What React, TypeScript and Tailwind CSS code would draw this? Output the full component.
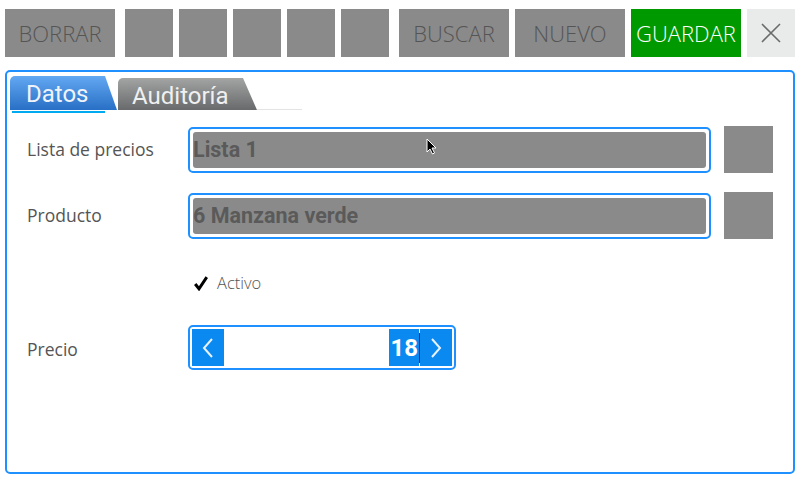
import React from "react";

const btn = "h-[48px] bg-[#8a8a8a] text-[#555] flex items-center justify-center";
const labelCls = "w-[161px] text-[17.5px] text-[#555]";

function FieldBox({ text }: { text: string }) {
  return (
    <div className="flex items-center">
      <div className="w-[523px] h-[46px] border-2 border-[#1e90ff] rounded-[5px] bg-white p-[3px]">
        <div className="h-full bg-[#8a8a8a] rounded-[3px] flex items-center text-[21.5px] font-bold text-[#5a5a5a] [font-family:Roboto,sans-serif] leading-none">
          {text}
        </div>
      </div>
      <div className="ml-[13px] w-[49px] h-[47px] bg-[#8a8a8a]"></div>
    </div>
  );
}

export default function App() {
  return (
    <div className="relative w-[800px] h-[480px] bg-white overflow-hidden [font-family:'Open_Sans',sans-serif]">
      {/* toolbar */}
      <div className="flex pt-[9px] pl-[5px] text-[22px] font-light">
        <div className={`${btn} w-[110px]`}>BORRAR</div>
        <div className="flex gap-[6px] ml-[10px]">
          <div className={`${btn} w-[48px]`}></div>
          <div className={`${btn} w-[48px]`}></div>
          <div className={`${btn} w-[48px]`}></div>
          <div className={`${btn} w-[48px]`}></div>
          <div className={`${btn} w-[48px]`}></div>
        </div>
        <div className="flex gap-[6px] ml-[10px]">
          <div className={`${btn} w-[110px]`}>BUSCAR</div>
          <div className={`${btn} w-[110px]`}>NUEVO</div>
          <div className="h-[48px] w-[110px] bg-[#009a00] text-white flex items-center justify-center">GUARDAR</div>
          <div className="h-[48px] w-[48px] bg-[#e9ebeb] flex items-center justify-center">
            <svg width="22" height="22" viewBox="0 0 22 22">
              <path d="M2 2 L20 20 M20 2 L2 20" stroke="#6b6b6b" strokeWidth="1.6" />
            </svg>
          </div>
        </div>
      </div>

      {/* panel */}
      <div className="mt-[13px] mx-[5px] h-[404px] border-2 border-[#1e90ff] rounded-[5px]">
        {/* tabs */}
        <div className="pl-[3px] pt-[4px]">
          <div className="flex items-end">
            <div className="w-[107px] h-[34px] rounded-tl-[5px] bg-gradient-to-b from-[#62a8f2] to-[#2870c6] [clip-path:polygon(0_0,95px_0,107px_100%,0_100%)] text-[#f0f4fa] text-[24px] pl-[16px] pt-[6px] leading-[24px] [font-family:Roboto,sans-serif]">
              Datos
            </div>
            <div className="ml-[1px] w-[139px] h-[32px] rounded-tl-[5px] bg-gradient-to-b from-[#a3a5a5] to-[#686a6b] [clip-path:polygon(0_0,125px_0,139px_100%,0_100%)] text-[#f0f0f0] text-[24px] pl-[14px] pt-[6px] leading-[24px] [font-family:Roboto,sans-serif]">
              Auditoría
            </div>
            <div className="w-[45px] h-[1px] bg-[#e3e3e3]"></div>
          </div>
          <div className="ml-[2px] mt-[1px] w-[93px] h-[2px] bg-[#00aaf0]"></div>
        </div>

        {/* form */}
        <div className="pl-[20px] mt-[13px]">
          <div className="flex items-center">
            <div className={labelCls}>Lista de precios</div>
            <FieldBox text="Lista 1" />
          </div>
          <div className="flex items-center mt-[19px]">
            <div className={labelCls}>Producto</div>
            <FieldBox text="6 Manzana verde" />
          </div>
          <div className="flex items-center mt-[34px] ml-[167px] h-[20px]">
            <svg width="14" height="15" viewBox="0 0 14 15" className="shrink-0">
              <path d="M1.2 8 L5 12.8 L12.8 1.2" stroke="#000" strokeWidth="3" fill="none" />
            </svg>
            <span className="ml-[9px] text-[16.5px] font-light text-[#555]">Activo</span>
          </div>
          <div className="flex items-center mt-[32px]">
            <div className={`${labelCls} pt-[3px]`}>Precio</div>
            <div className="w-[268px] h-[45px] border-2 border-[#1e90ff] rounded-[5px] bg-white p-[2px] flex items-stretch">
              <div className="w-[32px] bg-[#0a8af0] flex items-center justify-center">
                <svg width="12" height="22" viewBox="0 0 12 22">
                  <path d="M10 2 L2 11 L10 20" stroke="#e8f2ff" strokeWidth="2" fill="none" />
                </svg>
              </div>
              <div className="flex-1 flex items-center justify-end">
                <span className="bg-[#0a8af0] text-white font-bold text-[24px] [font-family:Roboto,sans-serif] h-full flex items-center px-[1px] leading-none">
                  18
                </span>
                <span className="w-[1px] h-[30px] bg-[#333]"></span>
              </div>
              <div className="w-[32px] bg-[#0a8af0] flex items-center justify-center">
                <svg width="12" height="22" viewBox="0 0 12 22">
                  <path d="M2 2 L10 11 L2 20" stroke="#e8f2ff" strokeWidth="2" fill="none" />
                </svg>
              </div>
            </div>
          </div>
        </div>
      </div>

      {/* mouse pointer */}
      <svg className="absolute left-[426px] top-[138px]" width="12" height="18" viewBox="0 0 12 18">
        <path d="M1 1 L1 14 L4 11 L6.5 16 L8.5 15 L6 10 L10 10 Z" fill="#000" stroke="#fff" strokeWidth="1" />
      </svg>
    </div>
  );
}
